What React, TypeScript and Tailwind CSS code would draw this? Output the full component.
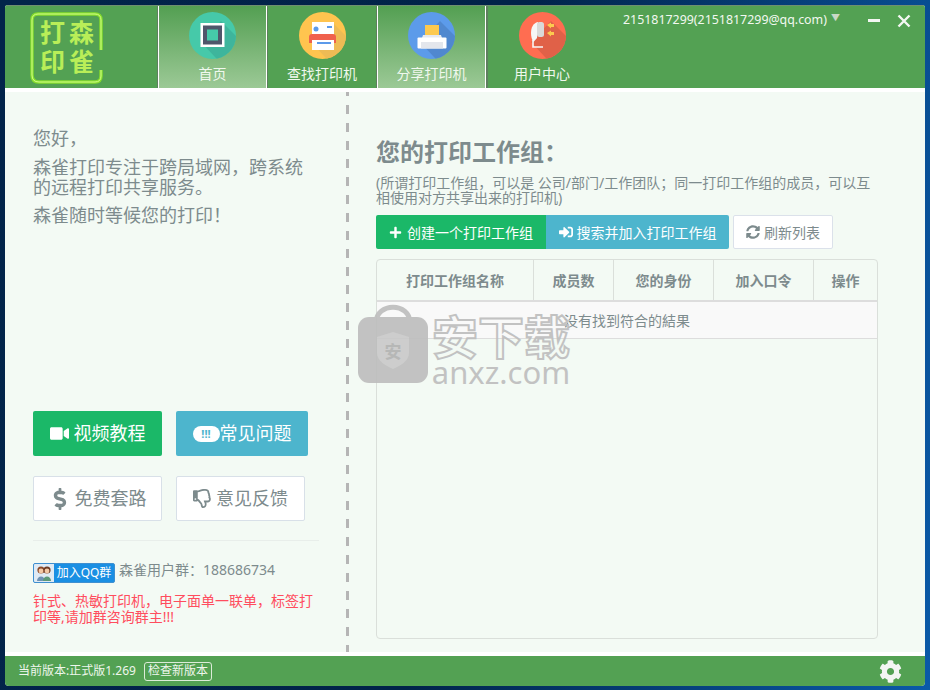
import React from "react";
import { FaVideo, FaDollarSign, FaRegThumbsDown, FaPlus, FaSignInAlt, FaSyncAlt, FaCog } from "react-icons/fa";

const font = { fontFamily: '"Noto Sans", "Noto Sans CJK SC", sans-serif' };

function IconCircle({ color, shade, children }: { color: string; shade: string; children: React.ReactNode }) {
  return (
    <svg width="47" height="47" viewBox="0 0 47 47" className="shrink-0">
      <defs>
        <clipPath id={"c" + color.slice(1)}>
          <circle cx="23.5" cy="23.5" r="23.5" />
        </clipPath>
      </defs>
      <circle cx="23.5" cy="23.5" r="23.5" fill={color} />
      <g clipPath={`url(#c${color.slice(1)})`}>
        <path d="M12 30 L32 9 L60 37 L40 60 Z" fill={shade} />
      </g>
      {children}
    </svg>
  );
}

function Tab({ label, active, width, children }: { label: string; active?: boolean; width: string; children: React.ReactNode }) {
  return (
    <div className={`h-full shrink-0 border-l border-l-[#5f7f5f] ${width}`}>
      <div className={`flex h-full flex-col items-center pt-[6px] ${active ? "border-x border-x-white bg-[linear-gradient(180deg,#539f52_0%,#9cc996_100%)]" : ""}`}>
        {children}
        <div className="mt-[6px] whitespace-nowrap text-[14px] leading-[18px] text-[#f0f8ee]">{label}</div>
      </div>
    </div>
  );
}

function Logo() {
  return (
    <div className="relative ml-[25px] h-[72px] w-[74px]">
      <svg width="74" height="72" viewBox="0 0 74 72" className="absolute left-0 top-0">
        <path d="M71 38 V8 Q71 2 65 2 H8 Q2 2 2 8 V63 Q2 70 9 70 H65 Q71 70 71 64 V58" fill="none" stroke="#86dd2b" strokeWidth="3.4" />
        <path d="M71 38 V8 Q71 2 65 2 H8 Q2 2 2 8 V63 Q2 70 9 70 H65 Q71 70 71 64 V58" fill="none" stroke="#d4ff8c" strokeWidth="1" />
      </svg>
      <div
        className="grid h-full grid-cols-[27px_27px] grid-rows-[29px_29px] content-center justify-center gap-x-[2px] pb-[5px] text-center text-[25px] font-bold leading-[29px] text-[#b9ee58]"
        style={{ fontFamily: '"Noto Sans CJK SC", serif' }}
      >
        <span>打</span>
        <span>森</span>
        <span>印</span>
        <span>雀</span>
      </div>
    </div>
  );
}

function QQBadge() {
  return (
    <div className="flex h-[20px] w-[82px] shrink-0 items-center overflow-hidden rounded-[2px] border border-[#3f8fd0] bg-[#1a8fe3]">
      <div className="flex h-full w-[20px] items-center justify-center bg-[#dfeaf4]">
        <svg width="18" height="18" viewBox="0 0 18 18">
          <circle cx="6" cy="6" r="3.6" fill="#8a4a2a" />
          <circle cx="12" cy="6" r="3.6" fill="#6e3a22" />
          <circle cx="6" cy="7" r="2.4" fill="#f3c9a6" />
          <circle cx="12" cy="7" r="2.4" fill="#f3c9a6" />
          <path d="M2 17 C2 11 10 11 10 17 Z" fill="#6f93b4" />
          <path d="M8 17 C8 11 16 11 16 17 Z" fill="#5c9a78" />
        </svg>
      </div>
      <span className="flex-1 text-center text-[12px] leading-[18px] text-white">加入QQ群</span>
    </div>
  );
}

function Watermark() {
  return (
    <div className="pointer-events-none absolute left-[357px] top-[301px] flex h-[84px] items-start opacity-90">
      <svg width="72" height="82" viewBox="0 0 72 82" className="mt-[2px] shrink-0">
        <path d="M19 20 C19 -1 53 -1 53 20" fill="none" stroke="#bdbdbd" strokeWidth="5" />
        <rect x="1" y="14" width="70" height="66" rx="11" fill="#bdbdbd" />
        <path d="M36 29 L52 34 V50 C52 58 43 63 36 66 C29 63 20 58 20 50 V34 Z" fill="#c9c9c9" />
        <text x="36" y="55" textAnchor="middle" fontSize="17" fill="#b0b0b0" fontFamily='"Noto Sans CJK SC"' fontWeight="700">安</text>
      </svg>
      <div className="ml-[1px] flex w-[142px] flex-col items-center pt-[12px]">
        <div className="whitespace-nowrap text-[46px] font-bold leading-[46px] text-transparent [-webkit-text-stroke:2px_#bdbdbd]">安下载</div>
        <div className="whitespace-nowrap text-[31px] leading-[26px] text-[#bdbdbd]">anxz.com</div>
      </div>
    </div>
  );
}

export default function App() {
  return (
    <div
      className="relative h-[690px] w-[930px] overflow-hidden bg-[linear-gradient(100deg,#02244a_0%,#012349_50%,#0a5aa8_100%)] pb-[4px] pl-[5px] pr-[5px] pt-[5px]"
      style={font}
    >
      <div className="flex h-full flex-col overflow-hidden rounded-t-[3px] rounded-b-[4px] bg-white">
        {/* header */}
        <div className="flex h-[83px] shrink-0 border-t border-t-[#6f8f6f] bg-[#53a153]">
          <div className="flex w-[152px] shrink-0 items-start pt-[6px]">
            <Logo />
          </div>
          <Tab label="首页" active width="w-[110px]">
            <IconCircle color="#46c9a9" shade="#3eb59c">
              <rect x="11.5" y="11" width="24" height="24" fill="#fff" />
              <rect x="14" y="13.5" width="19" height="19" fill="#4f566b" />
              <rect x="18" y="17.5" width="11" height="11" fill="#46c9a9" />
            </IconCircle>
          </Tab>
          <Tab label="查找打印机" width="w-[109px]">
            <IconCircle color="#ffc44f" shade="#eebb55">
              <rect x="13" y="10" width="22" height="13" fill="#fff" />
              <circle cx="17" cy="17" r="2.5" fill="#5c9aea" />
              <rect x="28" y="14" width="5" height="2" fill="#5c9aea" />
              <path d="M10 31 V25 Q10 22 13 22 H34 Q37 22 37 25 V31 Z" fill="#f0604c" />
              <rect x="13" y="28" width="22" height="10" fill="#fff" />
              <rect x="18" y="30" width="14" height="2" fill="#5c9aea" />
            </IconCircle>
          </Tab>
          <Tab label="分享打印机" active width="w-[110px]">
            <IconCircle color="#5c9bea" shade="#5088cf">
              <rect x="17" y="13" width="14" height="10" fill="#fcc94f" />
              <path d="M15 23 H33 L34 26 H14 Z" fill="#e6e9ef" />
              <rect x="9.5" y="25.5" width="29" height="11" rx="1" fill="#fff" />
              <rect x="13" y="30" width="22" height="6.5" fill="#e3e6ec" />
            </IconCircle>
          </Tab>
          <div className="flex h-full w-[110px] shrink-0 flex-col items-center border-l-[2px] border-l-[#5f7f5f] pt-[6px]">
            <IconCircle color="#ff6d51" shade="#e06148">
              <path d="M19 10 C14 11 12 16 12 21 C12 25 13 28 14.5 30 L18 26 Z" fill="#f6f6f6" />
              <rect x="18" y="10" width="7" height="15" rx="2.5" fill="#d9d9d9" />
              <path d="M14 28 V35 H24" fill="none" stroke="#f6f6f6" strokeWidth="1.6" />
              <path d="M28 13 L32 10.5 V12 H35 V15 H32 V16.5 Z M28 21 L32 18.5 V20 H35 V23 H32 V24.5 Z" fill="#fcc94f" />
            </IconCircle>
            <div className="mt-[6px] whitespace-nowrap text-[14px] leading-[18px] text-[#f0f8ee]">用户中心</div>
          </div>
          <div className="flex min-w-0 flex-1 items-start pl-[27px] pt-[6px]">
            <div className="flex items-center whitespace-nowrap text-[12.4px] leading-[16px] text-[#f2f8f0]">
              <span>2151817299(2151817299@qq.com)</span>
              <span className="ml-[4px] mt-[-4px] text-[9px] text-[#c9d8c6]">▼</span>
            </div>
          </div>
        </div>
        {/* body */}
        <div className="mt-[4px] flex min-h-0 flex-1 bg-[#f3faf4]">
          <div className="flex w-[341px] shrink-0 flex-col pl-[28px] pr-[27px] text-[#7d8b8d]">
            <div className="mt-[36px] text-[18px] leading-[20px]">您好，</div>
            <div className="mt-[9px] text-[18px] leading-[20px]">森雀打印专注于跨局域网，跨系统的远程打印共享服务。</div>
            <div className="mt-[8px] text-[18px] leading-[20px]">森雀随时等候您的打印！</div>
            <div className="mt-[186px] flex gap-[14px]">
              <div className="flex h-[45px] w-[129px] items-center justify-center gap-[5px] rounded-[2px] bg-[#1bb868] text-[18px] text-white">
                <FaVideo className="text-[19px]" />
                <span>视频教程</span>
              </div>
              <div className="flex h-[45px] w-[132px] items-center justify-center rounded-[2px] bg-[#4db5cd] text-[18px] text-white">
                <span className="flex h-[16px] w-[27px] items-center justify-center rounded-full bg-white text-[11px] font-bold leading-none text-[#4db5cd]">!!!</span>
                <span>常见问题</span>
              </div>
            </div>
            <div className="mt-[20px] flex gap-[14px]">
              <div className="flex h-[45px] w-[129px] items-center justify-center gap-[4px] rounded-[2px] border border-[#d8e0e8] bg-white text-[18px] text-[#7d8b8d]">
                <FaDollarSign className="text-[22px]" />
                <span>免费套路</span>
              </div>
              <div className="flex h-[45px] w-[129px] items-center justify-center gap-[4px] rounded-[2px] border border-[#d8e0e8] bg-white text-[18px] text-[#7d8b8d]">
                <FaRegThumbsDown className="text-[19px]" />
                <span>意见反馈</span>
              </div>
            </div>
            <div className="mt-[19px] h-px w-[286px] bg-[#e8eeea]" />
            <div className="mt-[22px] flex items-center gap-[4px] text-[14px] leading-[20px] text-[#7d8b8d]">
              <QQBadge />
              <span className="mt-[-6px]">森雀用户群：188686734</span>
            </div>
            <div className="mt-[10px] w-[284px] text-[14px] leading-[16px] text-[#ff4d5e]">针式、热敏打印机，电子面单一联单，标签打印等,请加群咨询群主!!!</div>
          </div>
          <div className="w-[3px] shrink-0 bg-[repeating-linear-gradient(180deg,#b5b5b5_0px,#b5b5b5_4px,transparent_4px,transparent_13px,#b5b5b5_13px,#b5b5b5_18px)]" />
          <div className="flex min-w-0 flex-1 flex-col pl-[27px] pr-[47px] text-[#7d8b8d]">
            <div className="mt-[44px] text-[24px] font-bold leading-[32px]">您的打印工作组：</div>
            <div className="mt-[7px] text-[14px] leading-[15px]">(所谓打印工作组，可以是 公司/部门/工作团队；同一打印工作组的成员，可以互相使用对方共享出来的打印机)</div>
            <div className="mt-[10px] flex h-[34px] shrink-0 text-[14px] text-white">
              <div className="flex w-[170px] items-center justify-center gap-[5px] rounded-l-[2px] bg-[#1bb868]">
                <FaPlus className="text-[13px]" />
                <span>创建一个打印工作组</span>
              </div>
              <div className="flex w-[183px] items-center justify-center gap-[4px] rounded-r-[2px] bg-[#4db5cd]">
                <FaSignInAlt className="text-[14px]" />
                <span>搜索并加入打印工作组</span>
              </div>
              <div className="ml-[4px] flex w-[100px] items-center justify-center gap-[4px] rounded-[2px] border border-[#dbe1ea] bg-white text-[#7d8b8d]">
                <FaSyncAlt className="text-[14px]" />
                <span>刷新列表</span>
              </div>
            </div>
            <div className="mb-[13px] mt-[10px] flex min-h-0 flex-1 flex-col rounded-[4px] border border-[#dadfda]">
              <div className="grid h-[42px] shrink-0 grid-cols-[156px_80px_100px_100px_1fr] border-b-[2px] border-b-[#dddddd] text-center text-[14px] font-bold">
                <div className="flex items-center justify-center">打印工作组名称</div>
                <div className="flex items-center justify-center border-l border-l-[#dadfda]">成员数</div>
                <div className="flex items-center justify-center border-l border-l-[#dadfda]">您的身份</div>
                <div className="flex items-center justify-center border-l border-l-[#dadfda]">加入口令</div>
                <div className="flex items-center justify-center border-l border-l-[#dadfda]">操作</div>
              </div>
              <div className="flex h-[37px] shrink-0 items-center justify-center border-b border-b-[#dddddd] bg-[#f9f9f9] text-[14px]">没有找到符合的結果</div>
            </div>
          </div>
        </div>
        {/* footer */}
        <div className="mt-[4px] flex h-[30px] shrink-0 items-center bg-[#53a153] pl-[13px] pr-[23px] text-[12px] text-[#eef6ec]">
          <span>当前版本:正式版1.269</span>
          <span className="ml-[8px] flex h-[19px] w-[68px] items-center justify-center rounded-[3px] border border-[#dcebd8] leading-none">检查新版本</span>
          <FaCog className="ml-auto text-[23px] text-[#f3f5f3]" />
        </div>
      </div>
      {/* window controls */}
      <svg width="50" height="16" viewBox="0 0 50 16" className="absolute left-[866px] top-[13px]">
        <rect x="2" y="6" width="12" height="3" fill="#f3f7f2" />
        <path d="M32.5 2.5 L43.5 13.5 M43.5 2.5 L32.5 13.5" stroke="#f3f7f2" strokeWidth="2.4" />
      </svg>
      <Watermark />
    </div>
  );
}
